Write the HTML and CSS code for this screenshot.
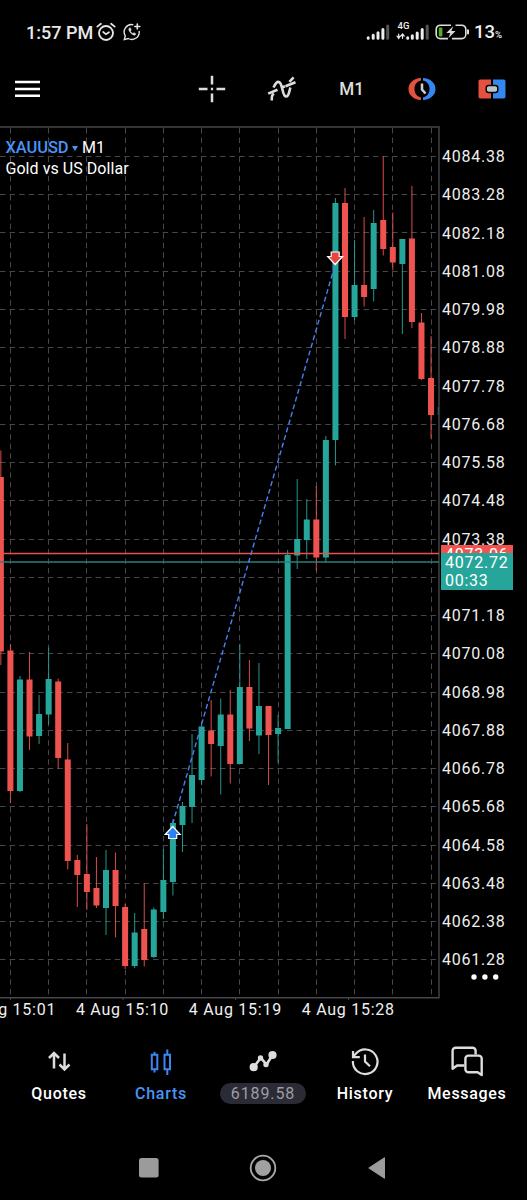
FILE: index.html
```html
<!DOCTYPE html>
<html lang="en">
<head>
<meta charset="utf-8">
<title>XAUUSD M1</title>
<link rel="stylesheet" href="styles.css">
</head>
<body>
<header class="status">
  <div class="status-left">
    <span class="clock">1:57 PM</span>
    <svg class="ic-alarm" width="20" height="20" viewBox="0 0 20 20" fill="none" stroke="#e4e4e4" stroke-linecap="round">
      <circle cx="10" cy="11" r="7" stroke-width="1.9"/>
      <path d="M1.300 4.600 4.900 1.700M18.700 4.600 15.100 1.700" stroke-width="1.8"/>
      <path d="M7.200 10 10 12.300 13 10.200" stroke-width="1.7"/>
    </svg>
    <svg class="ic-wa" width="18" height="18" viewBox="0 0 18 18" fill="none" stroke="#e4e4e4" stroke-width="1.4" stroke-linecap="round">
      <path d="M9.800 1.700A7.400 7.400 0 0 0 2.300 12.900L1.300 16.600 5.200 15.500A7.400 7.400 0 0 0 16.200 8.400"/>
      <path d="M14.300 1v5M11.800 3.500h5" stroke-width="1.6"/>
      <path d="M5.900 5.600c-.8 2.500 3 6.600 5.900 6.600l1.100-1.300-1.800-1.200-1.200.8C8.500 9.900 7.800 9 7.400 8l.8-1-.8-1.900z" fill="#e4e4e4" stroke-width=".5"/>
    </svg>
  </div>
  <div class="status-right">
    <svg width="24" height="16" viewBox="0 0 24 16" stroke-width="3" stroke-linecap="round" stroke="#eee">
      <path d="M2.200 14.300v-.6M7.200 14.300v-3M12 14.300v-5.600M16.900 14.300V5.500"/>
      <path d="M21.700 14.300V2" stroke="#555"/>
    </svg>
    <div class="net">
      <span class="g4">4G</span>
      <svg width="33" height="16" viewBox="0 0 33 16" stroke="#eee" stroke-linecap="round">
        <path d="M2.700 10v4M1 12l1.700 2.500L4.300 12M6.500 14.300v-4M4.900 12l1.600-2 1.700 2" stroke-width="1.200" fill="none"/>
        <path d="M11.700 14.300v-.6M16.300 14.300v-2.600M21.200 14.300V9M26.200 14.300V5.500" stroke-width="3"/>
        <path d="M31.200 14.300V2" stroke="#555" stroke-width="3"/>
      </svg>
    </div>
    <svg class="ic-batt" width="34" height="16" viewBox="0 0 34 16" fill="none" stroke="#dcdcdc" stroke-width="1.600">
      <path d="M16 1.200H5.200a4 4 0 0 0-4 4v5.400a4 4 0 0 0 4 4H13M20.500 1.200h6.300a4 4 0 0 1 4 4v5.400a4 4 0 0 1-4 4H17"/>
      <path d="M33 5.500v4.800" stroke-width="2"/>
      <rect x="3.800" y="3.600" width="3.600" height="8.800" rx="1" fill="#4fae26" stroke="none"/>
      <path d="M18.300 2 11.300 9h4L13.500 14l7-7h-4.200z" fill="#dcdcdc" stroke="none"/>
    </svg>
    <span class="pct">13<small>%</small></span>
  </div>
</header>

<nav class="toolbar">
  <svg class="ic-menu" width="25" height="18" viewBox="0 0 25 18" stroke="#fff" stroke-width="2.600"><path d="M0 2h25M0 9h25M0 15.700h25"/></svg>
  <div class="tools">
    <svg width="28" height="28" viewBox="0 0 28 28" stroke="#ddd" stroke-width="2.500"><path d="M14 .8v8.700M14 18.500v8.700M.8 14h8.700M18.500 14h8.700M12.900 14h2.200"/></svg>
    <svg width="30" height="26" viewBox="0 0 30 26" fill="none" stroke="#ddd" stroke-width="2.600">
      <path d="M1.200 17.600 10.500 13.700M14 11.800l4-1.600M18.500 10.300l10-4"/>
      <path d="M4.800 24.500v-2.800q0-2.500 2-4.200M6.500 11.500C9 6.500 10.500 5 12.500 6.300c3.500 2.300 2.500 13.500 6.500 14.200 3.200.5 3.200-6.500 4.500-9M22.400 5.800l4.200-4.400"/>
    </svg>
    <span class="tf">M1</span>
    <svg width="28" height="24" viewBox="0 0 28 24">
      <path d="M13 1C5.500 1.500 .5 6 .5 12s5 10.500 12.500 11v-2.600C8.800 19.500 6.500 16.300 6.500 12s2.300-7.500 6.500-8.400z" fill="#e5503f"/>
      <path d="M15 1c7.500.5 12.500 5 12.500 11s-5 10.500-12.500 11v-2.600c4.200-.9 6.500-4.100 6.500-8.400s-2.300-7.500-6.500-8.400z" fill="#3586f0"/>
      <path d="M14 6.500v6l3.500 4" fill="none" stroke="#ccd0d2" stroke-width="2.500"/>
    </svg>
    <svg width="28" height="20" viewBox="0 0 28 20">
      <path d="M2.200.5H13v19H2.200A1.700 1.700 0 0 1 .5 17.800V2.200A1.700 1.700 0 0 1 2.200.5z" fill="#e5503f"/>
      <path d="M15 .5h10.800a1.700 1.700 0 0 1 1.700 1.700v15.600a1.700 1.700 0 0 1-1.700 1.700H15z" fill="#3586f0"/>
      <rect x="8.200" y="6.500" width="11.600" height="7" rx="2.500" fill="#bcc5ca" stroke="#000" stroke-width="1.400"/>
    </svg>
  </div>
</nav>

<main class="chart">
  <svg class="plot" id="plot" width="440" height="874" viewBox="0 126 440 874"></svg>
  <div class="prices" id="prices"></div>
  <div class="symbol">
    <div class="pair"><b>XAUUSD</b><i></i><span>M1</span></div>
    <div>Gold vs US Dollar</div>
  </div>
  <div class="tag ask">4073.06</div>
  <div class="tag bid">4072.72<br>00:33</div>
  <svg class="more" width="28" height="6" viewBox="0 0 28 6" fill="#fff"><circle cx="3" cy="3" r="2.700"/><circle cx="13.900" cy="3" r="2.700"/><circle cx="24.700" cy="3" r="2.700"/></svg>
</main>
<div class="times"><span>4 Aug 15:01</span><span>4 Aug 15:10</span><span>4 Aug 15:19</span><span>4 Aug 15:28</span></div>

<nav class="tabs">
  <div class="tab">
    <svg width="32" height="32" viewBox="0 0 32 32" fill="none" stroke="#ddd" stroke-width="2.500"><path d="M11 23.500V8.500M6 13l5-5 5 5M21.500 8.500v15M16.500 19.500l5 5 5-5"/></svg>
    <span>Quotes</span>
  </div>
  <div class="tab active">
    <svg width="32" height="32" viewBox="0 0 32 32" fill="none" stroke="#3b86f7" stroke-width="2"><path d="M6.800 9.800h5.500v14.400H6.800zM9.500 7v3M9.500 24v3.500M19.500 9.800H25v14.400h-5.500zM22.300 4.500v5M22.300 24v6"/></svg>
    <span>Charts</span>
  </div>
  <div class="tab">
    <svg width="32" height="32" viewBox="0 0 32 32" fill="none" stroke="#ddd" stroke-width="2.600" stroke-linejoin="round"><path d="M6.700 22.200 13.800 12.800 19.500 19.500 25.500 10"/><circle cx="6.700" cy="22.200" r="2.800" fill="#ddd"/><circle cx="25.500" cy="10" r="2.800" fill="#ddd"/><circle cx="13.500" cy="13" r="1.400" fill="#ddd"/><circle cx="19" cy="19.600" r="1.400" fill="#ddd"/></svg>
    <span class="pill">6189.58</span>
  </div>
  <div class="tab">
    <svg width="32" height="32" viewBox="0 0 32 32" fill="none" stroke="#ddd" stroke-width="2.200"><path d="M3.900 16A12.300 12.300 0 1 0 6.800 8.800L4 11.700M4 6v6.200h6.800" /><path d="M16 9.500v7l5 4.800"/></svg>
    <span>History</span>
  </div>
  <div class="tab">
    <svg width="34" height="32" viewBox="0 0 34 32" fill="none" stroke="#ddd" stroke-width="2.400" stroke-linejoin="round"><path d="M25.600 9.500V5.800a3 3 0 0 0-3-3H5.600a3 3 0 0 0-3 3v18l4.500-3.300h7.200"/><path d="M18.400 10.600h10.300a3 3 0 0 1 3 3v16.500l-4-2.900h-9.300a3 3 0 0 1-3-3V13.600a3 3 0 0 1 3-3z"/></svg>
    <span>Messages</span>
  </div>
</nav>

<footer class="sysbar">
  <svg width="20" height="20"><rect width="19.600" height="19.400" rx="2.500" fill="#9b9b9b"/></svg>
  <svg width="28" height="28" viewBox="0 0 28 28"><circle cx="14" cy="14" r="12.300" fill="none" stroke="#aaa" stroke-width="1.800"/><circle cx="14" cy="14" r="8" fill="#a0a0a0"/></svg>
  <svg width="20" height="24" viewBox="0 0 20 24"><path d="M1.800 12 17.500 1.700v20.600z" fill="#9b9b9b" stroke="#9b9b9b" stroke-linejoin="round"/></svg>
</footer>
<script src="chart.js"></script>
</body>
</html>
```
FILE: styles.css
```css
* { box-sizing: border-box; }
body {
  margin: 0;
  width: 527px;
  height: 1200px;
  overflow: hidden;
  background: #000;
  color: #efefef;
  font-family: Roboto, "Liberation Sans", sans-serif;
  display: flex;
  flex-direction: column;
}
svg { display: block; flex: none; }

.status {
  height: 64px;
  padding: 0 26px 0 26px;
  display: flex;
  justify-content: space-between;
  align-items: center;
}
.status-left, .status-right { display: flex; align-items: center; }
.clock { font-size: 18px; font-weight: 500; color: #e8e8e8; width: 70px; white-space: nowrap; }
.ic-alarm { margin-top: -1px; }
.ic-wa { margin: -1px 0 0 7px; }
.status-right { gap: 6px; }
.net { display: flex; flex-direction: column; position: relative; }
.g4 { position: absolute; left: 1.500px; top: -3.500px; font-size: 9.500px; line-height: 11px; font-weight: 500; }
.status-right > svg:first-child, .net { margin-top: -1px; }
.pct { font-size: 18.500px; font-weight: 500; margin-left: -1px; width: 27px; white-space: nowrap; }
.pct small { font-size: 9.500px; }

.toolbar {
  height: 62px;
  padding: 0 0 13px 14.500px;
  display: flex;
  justify-content: space-between;
  align-items: center;
}
.tools { display: grid; grid-template-columns: repeat(5, 70px); align-items: center; justify-items: center; }
.tf { font-size: 19px; font-weight: 500; color: #ddd; transform: scaleX(.9); }

.chart { position: relative; height: 874px; display: flex; }
.prices { padding: 12.200px 0 0 2px; font-size: 16px; letter-spacing: .75px; }
.prices div { height: 38.260px; line-height: 38.260px; }
.symbol { position: absolute; left: 5.500px; top: 12px; font-size: 16px; line-height: 20.500px; color: #fff; white-space: nowrap; letter-spacing: .05px; }
.pair { display: flex; align-items: center; }
.pair b { font-weight: 500; color: #4a94f7; font-size: 16.500px; width: 66px; letter-spacing: -.1px; }
.pair i {
  border: 3px solid transparent;
  border-top: 5px solid #4a94f7;
  border-bottom: 0;
  margin-right: 4.500px;
}
.tag { position: absolute; left: 441px; width: 72px; padding-left: 4px; font-size: 16px; letter-spacing: .75px; line-height: 18px; color: #fff; }
.ask { top: 418.500px; height: 20px; background: #ef5350; padding-top: 1.500px; }
.bid { top: 426.500px; height: 37px; background: #26a69a; padding-top: 1px; }
.more { position: absolute; left: 471px; top: 848px; }

.times { height: 38px; margin-left: -37px; display: flex; font-size: 16px; letter-spacing: .75px; line-height: 20px; white-space: nowrap; }
.times span { flex: 0 0 112.900px; }

.tabs { height: 85px; padding: 7px 8px 0; display: grid; grid-template-columns: repeat(5, 102px); }
.tab { display: flex; flex-direction: column; align-items: center; font-size: 16px; font-weight: 500; letter-spacing: .7px; color: #fff; }
.tab span { margin-top: 6px; height: 21px; line-height: 21px; }
.tab.active { color: #4a94f7; }
.tab .pill { padding: 0 10.500px; border-radius: 11px; background: #2b2b35; color: #9d9da5; font-weight: 400; letter-spacing: .9px; }

.sysbar { flex: 1; padding: 13px 140px 0 139px; display: flex; justify-content: space-between; align-items: center; }
```
FILE: chart.js
```js
const RED = '#ef5350', GREEN = '#26a69a';
const STEP = 9.56, X0 = 10.4;

// Each candle: [direction, high, body top, body bottom, low]
const candles = [
  ['r',450.5,477,651.5,665],['r',644,650.5,791,803],['g',676,679.5,791,792],['r',652,679.5,736.5,750],
  ['g',695,714,736,744],['g',647.5,679,714.5,724.5],['r',678.5,681.5,758,769],['r',743,759.5,861,869.5],
  ['r',855,860,875,907],['r',824,874,892,910],['r',857,888,905.5,908],['g',850,870,908,935],
  ['r',852.5,870,906,937.5],['r',904,907,966,969],['g',913,932.5,966,968],['r',883.5,929,960,966.5],
  ['g',907.5,909.5,957,958],['g',849,880,912,919],['g',819,823,882,895.5],['g',802,806,825,852],
  ['g',734,775,807,823],['g',724,726.5,780,785],['r',700,730.5,744,776.5],['g',698.5,714.5,746,794.5],
  ['r',690,714.5,764,783.5],['g',644,687,764,764],['r',660,687,728.5,741],['g',663,706,735.5,754],
  ['r',706,706,735,785],['g',715,728,734,763],['g',550,555,729,729],['g',479,539,555.5,569],
  ['g',499,519.5,540,559],['r',486,519.5,557.5,571],['g',436,440,557.5,563],['g',198,203,440,465.5],
  ['r',188,203,317,339],['g',240,285,317,320],['r',217,285,297,306.5],['g',210,223,289,301.5],
  ['r',156,220,249,255.5],['r',212.5,247,262.5,270.5],['g',239,239,264,334],['r',186,238.5,322,328],
  ['r',313,322.5,379,380],['r',336,378,415,438.5]
];

let svg = '<g stroke="#47474a" stroke-width="1" stroke-dasharray="5.500 4.065">';
for (let i = 0; i < 12; i++) {
  const x = Math.floor(X0 + i * STEP * 4) + .5;
  svg += `<path d="M${x} 128V997"/>`;
}
for (let i = 0; i < 22; i++) {
  const y = Math.floor(156.4 + i * 38.26) + .5;
  svg += `<path d="M0 ${y}H438"/>`;
}
svg += '</g><path d="M0 127H439V997.700H0" fill="none" stroke="#46464b" stroke-width="1.400"/>';
svg += '<path d="M10.500 998v2M123 998v2M235.500 998v2M348.500 998v2" stroke="#46464b"/>';

candles.forEach(([dir, high, top, bottom, low], k) => {
  const x = X0 + (k - 1) * STEP;
  const color = dir === 'r' ? RED : GREEN;
  svg += `<path d="M${x} ${high}V${low}" stroke="${color}" stroke-width="1" stroke-opacity=".9"/>`;
  svg += `<rect x="${x - 3}" y="${top}" width="6" height="${bottom - top}" fill="${color}"/>`;
});

svg += '<path d="M0 553.500H439" stroke="#ea504e" stroke-width="1.300"/>';
svg += '<path d="M0 562H439" stroke="#2a7f76" stroke-width="1.400"/>';
svg += '<path d="M438.200 407v8" stroke="#1c6a70"/>';
svg += '<path d="M172.600 824 335 265" stroke="#4880f0" stroke-width="1.400" stroke-dasharray="5 3"/>';
svg += '<path d="M172.700 826.500 180.200 834.500H176.700V838.500H168.700V834.500H165.200Z" fill="#2f80f2" stroke="#fff" stroke-width="1.200"/>';
svg += '<path d="M335.200 264.500 342.700 256.500H339.200V252H331.200V256.500H327.700Z" fill="#e94440" stroke="#fff" stroke-width="1.200"/>';
document.getElementById('plot').innerHTML = svg;

// The 4072.28 level sits behind the bid tag, so its label stays blank.
document.getElementById('prices').innerHTML = Array.from({ length: 22 }, (_, i) =>
  `<div>${i === 11 ? '' : (4084.38 - i * 1.1).toFixed(2)}</div>`).join('');
```
